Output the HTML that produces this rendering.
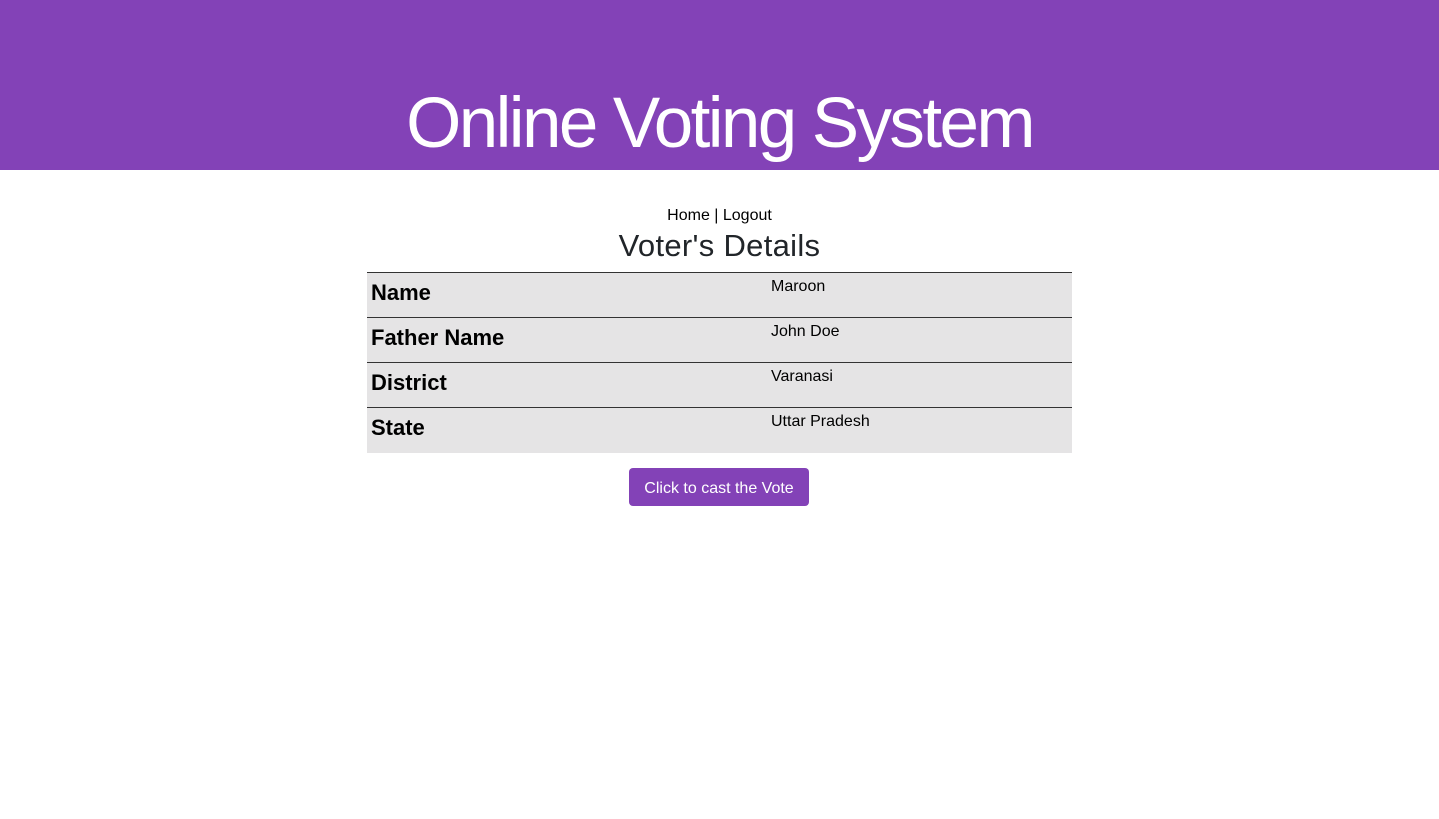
<!DOCTYPE html>
<html><head><meta charset="utf-8"><style>
*{box-sizing:border-box;margin:0;padding:0}
body{width:1439px;height:819px;background:#fff;font-family:"Liberation Sans",sans-serif;color:#000;position:relative;overflow:hidden}
.hdr{position:absolute;left:0;top:0;width:1439px;height:170px;background:#8342b7}
.hdr h1{position:absolute;left:0;right:0;top:84px;text-align:center;color:#fff;font-weight:400;font-size:71px;line-height:80px;letter-spacing:-2.6px}
.nav{position:absolute;left:0;right:0;top:207px;text-align:center;font-size:16px;line-height:18px}
.h2{position:absolute;left:0;right:0;top:229px;text-align:center;font-size:31px;line-height:34px;color:#212529;font-weight:400;letter-spacing:0.3px}
table{position:absolute;left:367px;top:272px;width:705px;border-collapse:collapse;background:#e5e4e5}
td{height:45px;border-top:1px solid #333;vertical-align:top}
td.l{width:400px;padding:6px 4px 0;font-weight:bold;font-size:22px;line-height:28px}
td.v{padding:5px 4px 0;font-size:16px;line-height:18px}
.btn{position:absolute;left:629px;top:468px;width:180px;height:38px;background:#8342b7;color:#fff;border-radius:4px;font-size:16px;line-height:38px;padding-top:2px;text-align:center}
</style></head><body>
<div class="hdr"><h1>Online Voting System</h1></div>
<div class="nav">Home | Logout</div>
<div class="h2">Voter's Details</div>
<table>
<tr><td class="l">Name</td><td class="v">Maroon</td></tr>
<tr><td class="l">Father Name</td><td class="v">John Doe</td></tr>
<tr><td class="l">District</td><td class="v">Varanasi</td></tr>
<tr><td class="l">State</td><td class="v">Uttar Pradesh</td></tr>
</table>
<div class="btn">Click to cast the Vote</div>
</body></html>
